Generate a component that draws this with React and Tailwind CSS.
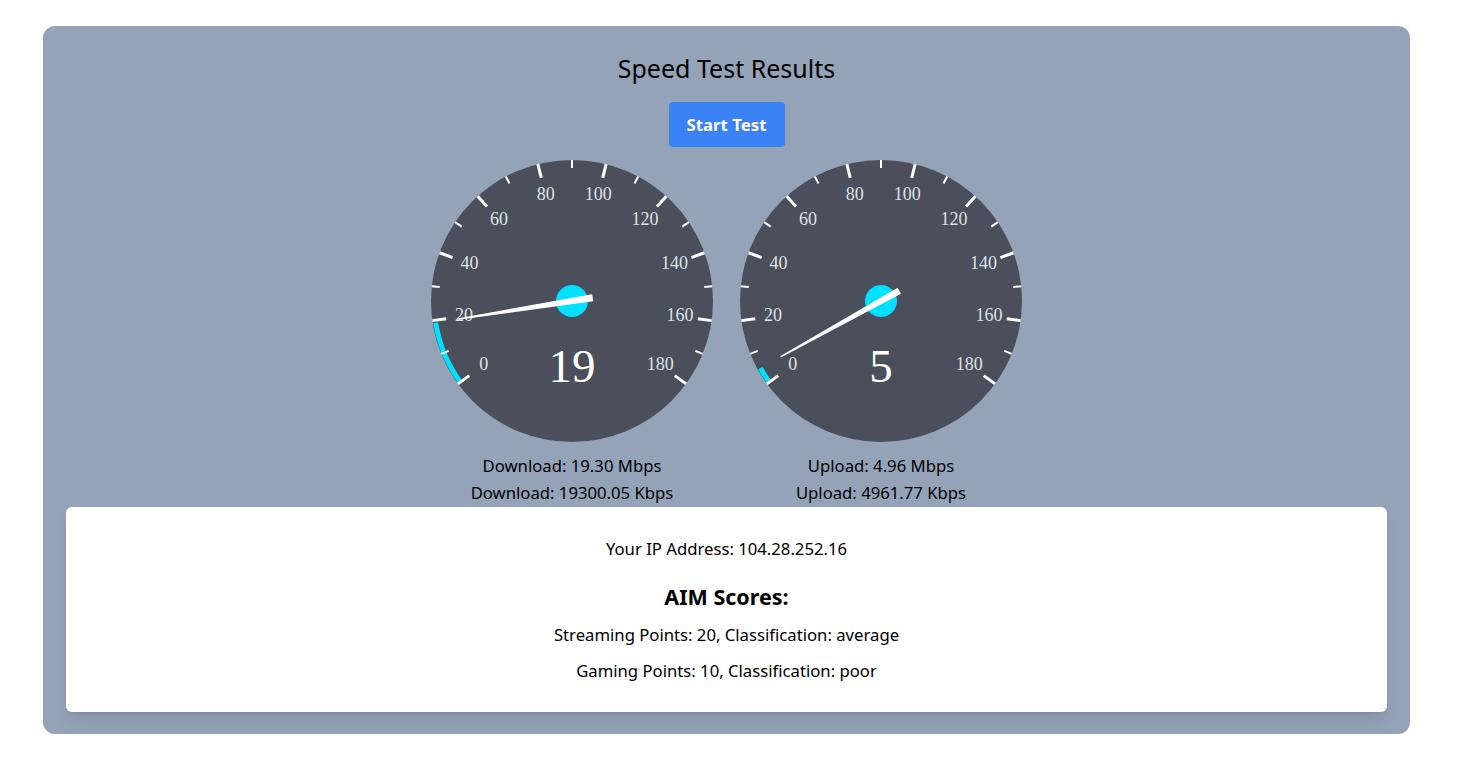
import React from "react";

const sans = { fontFamily: '"Noto Sans", "Open Sans", sans-serif' };

function Gauge({ value }) {
    const cx = 150;
    const cy = 150;
    const toAngle = (v) => -126 + v * 1.4;
    const angle = toAngle(value);

    const polar = (deg, r) => {
        const rad = (deg * Math.PI) / 180;
        return [cx + r * Math.sin(rad), cy - r * Math.cos(rad)];
    };

    const ticks = [];
    for (let i = 0; i <= 18; i++) {
        const deg = -126 + i * 14;
        const major = i % 2 === 0;
        const [x1, y1] = polar(deg, major ? 127 : 133);
        const [x2, y2] = polar(deg, 141);
        ticks.push(
            <line
                key={i}
                x1={x1}
                y1={y1}
                x2={x2}
                y2={y2}
                stroke="#ffffff"
                strokeWidth={major ? 3 : 2}
            />
        );
    }

    const labels = [0, 20, 40, 60, 80, 100, 120, 140, 160, 180].map((v) => {
        const [x, y] = polar(toAngle(v), 109);
        return (
            <text
                key={v}
                x={x}
                y={y - 1}
                textAnchor="middle"
                dominantBaseline="central"
                fill="#dfe2e6"
                fontSize="18"
                fontFamily='"Liberation Serif", serif'
            >
                {v}
            </text>
        );
    });

    const [ax, ay] = polar(-126, 138);
    const [bx, by] = polar(angle, 138);
    const large = angle + 126 > 180 ? 1 : 0;

    return (
        <svg width="300" height="300" viewBox="0 0 300 300">
            <circle cx={cx} cy={cy} r="141" fill="#4a4f5b" />
            <path
                d={`M ${ax} ${ay} A 138 138 0 ${large} 1 ${bx} ${by}`}
                stroke="#00e1ff"
                strokeWidth="5"
                fill="none"
            />
            {ticks}
            {labels}
            <text
                x={cx}
                y={cy + 65}
                textAnchor="middle"
                dominantBaseline="central"
                fill="#ffffff"
                fontSize="47"
                fontFamily='"Liberation Serif", serif'
            >
                {Math.round(value)}
            </text>
            <circle cx={cx} cy={cy} r="16" fill="#00e1ff" />
            <g transform={`translate(${cx} ${cy}) rotate(${angle})`}>
                <polygon points="-0.8,-115 0.8,-115 3.5,21 -3.5,21" fill="#ffffff" />
            </g>
        </svg>
    );
}

export default function App() {
    return (
        <div className="min-h-screen bg-white pt-[26px]" style={sans}>
            <div className="ml-[43px] w-[1367px] rounded-xl bg-[#94a3b8] px-[23px] pt-[26px] pb-[22px]">
                <h1 className="text-center text-[25px] leading-[32px] text-black">Speed Test Results</h1>

                <div className="mt-[18px] flex justify-center">
                    <button className="h-[45px] w-[116px] rounded bg-[#3b82f6] text-[16.8px] font-bold text-white">
                        Start Test
                    </button>
                </div>

                <div className="mt-1 flex justify-center gap-[9px]">
                    <div className="flex flex-col items-center">
                        <Gauge value={19.3} />
                        <p className="mt-[1px] text-center text-[16.7px] leading-[27px] text-black">Download: 19.30 Mbps</p>
                        <p className="text-center text-[16.7px] leading-[27px] text-black">Download: 19300.05 Kbps</p>
                    </div>
                    <div className="flex flex-col items-center">
                        <Gauge value={4.96} />
                        <p className="mt-[1px] text-center text-[16.7px] leading-[27px] text-black">Upload: 4.96 Mbps</p>
                        <p className="text-center text-[16.7px] leading-[27px] text-black">Upload: 4961.77 Kbps</p>
                    </div>
                </div>

                <div className="mt-[1px] rounded-md bg-white pt-[30px] pb-[29px] text-center text-black shadow-lg">
                    <p className="text-[16.7px] leading-6">Your IP Address: 104.28.252.16</p>
                    <h2 className="mt-[22px] text-[21.5px] font-bold leading-7">AIM Scores:</h2>
                    <p className="mt-3 text-[16.7px] leading-6">Streaming Points: 20, Classification: average</p>
                    <p className="mt-3 text-[16.7px] leading-6">Gaming Points: 10, Classification: poor</p>
                </div>
            </div>
        </div>
    );
}
